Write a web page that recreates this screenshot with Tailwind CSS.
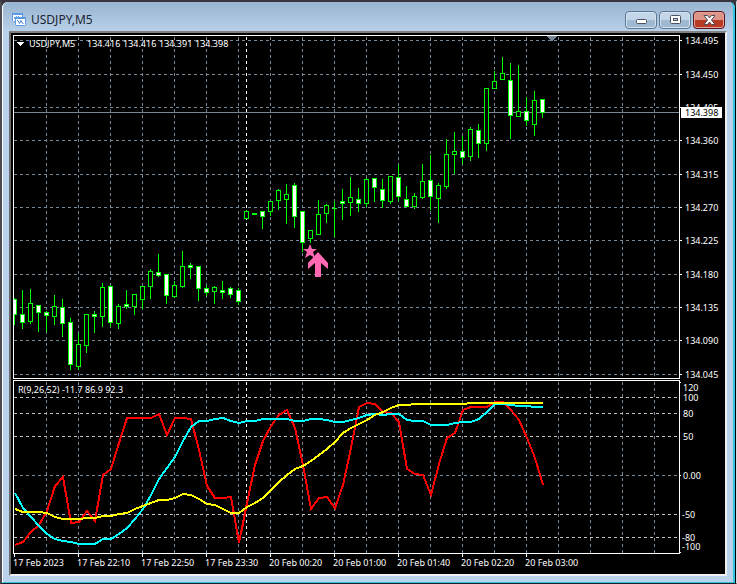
<!DOCTYPE html>
<html lang="en">
<head>
    <meta charset="UTF-8">
    <meta name="viewport" content="width=device-width, initial-scale=1.0">
    <title>USDJPY,M5</title>
    <script src="https://cdn.jsdelivr.net/npm/@tailwindcss/browser@4"></script>
</head>
<body class="bg-[#3a3640] font-['Noto_Sans',sans-serif]">
    <div class="border-t-2 border-l-2 border-r border-b border-t-[#3a3340] border-l-[#4a4a52] border-r-[#d8dce2] border-b-[#16202a]">
        <div class="rounded-t-md border-r border-r-black bg-[#b9d1ea]">
            <div class="rounded-t-md border-l border-r-2 border-b border-l-white border-r-[#35c3e0] border-b-[#35c3e0] px-1.5 pb-1.5 bg-linear-to-b from-[#99b4d1] to-[#b9d1ea] to-[30px]">
                <!-- Title bar -->
                <header class="flex h-[29px] items-center justify-between pl-0.5 pr-0.5 pt-1.5">
                    <div class="flex items-center gap-1">
                        <svg class="h-4 w-4" viewBox="0 0 16 16" fill="none">
                            <rect x="1.5" y="1.5" width="10" height="8" rx="1" fill="#fff" stroke="#5b9be6"/>
                            <path d="M1 2h11" stroke="#5b9be6" stroke-width="2"/>
                            <path d="M3.500 7V5M5.500 6V4M7.500 6V4" stroke="#5b9be6"/>
                            <rect x="4.500" y="5.500" width="10" height="8" rx="1" fill="#fff" stroke="#5b9be6"/>
                            <path d="M4 6h11" stroke="#5b9be6" stroke-width="2"/>
                            <path d="M6 8.500h1l1.500 3 1.500-3 1.500 3h1" stroke="#4a86d8"/>
                        </svg>
                        <h1 class="text-[12px] leading-4 text-[#1c2430]">USDJPY,M5</h1>
                    </div>
                    <div class="flex gap-0.5">
                        <button type="button" aria-label="Minimize" class="flex h-[18px] w-8 items-center justify-center rounded-sm border border-[#5c7590] bg-linear-to-b from-[#c3d5e8] from-50% to-[#9fb9d3] to-50% shadow-[inset_0_0_0_1px_#d5e3f1]">
                            <svg class="h-3 w-3" viewBox="0 0 12 12"><rect x="1.5" y="5.5" width="10" height="4" rx="1" fill="#fff" stroke="#4b535f"/></svg>
                        </button>
                        <button type="button" aria-label="Maximize" class="flex h-[18px] w-8 items-center justify-center rounded-sm border border-[#5c7590] bg-linear-to-b from-[#c3d5e8] from-50% to-[#9fb9d3] to-50% shadow-[inset_0_0_0_1px_#d5e3f1]">
                            <svg class="h-3 w-3" viewBox="0 0 12 12"><rect x="1.5" y="1.5" width="10" height="8" rx="1" fill="#fff" stroke="#4b535f"/><rect x="4.5" y="4.5" width="4" height="2" fill="#b9cce0" stroke="#4b535f"/></svg>
                        </button>
                        <button type="button" aria-label="Close" class="flex h-[18px] w-8 items-center justify-center rounded-sm border border-[#5a1420] bg-linear-to-b from-[#dc9488] from-50% to-[#b93a24] to-50% shadow-[inset_0_0_0_1px_#e5a498]">
                            <svg class="h-3 w-3" viewBox="0 0 12 12"><path d="M1 1.500h3.500L6.500 4l2-2.500H12L8.500 6l3.500 4.500H8.500L6.500 8l-2 2.500H1L4.500 6z" fill="#fff" stroke="#4b4a58"/></svg>
                        </button>
                    </div>
                </header>

                <!-- Chart, plotted in window pixels -->
                <main class="border-2 border-t-[#808080] border-l-[#696969] border-r-[#f0f0f0] border-b-[#f0f0f0] bg-black">
                    <svg id="chart" class="block h-auto w-full text-[9px]" viewBox="11 33 714 541" shape-rendering="crispEdges" role="img" aria-label="USDJPY M5 price chart with R indicator"></svg>
                </main>
            </div>
        </div>
    </div>

    <script>
        // high, low, body top, body bottom, filled
        const candles = [
            [298,325,299,315,1],[290,329,314,323,1],[289,324,303,322,0],[305,332,305,313,1],[311,332,312,316,1],
            [295,325,306,317,0],[299,337,307,324,1],[318,370,322,365,1],[334,370,344,367,0],[314,353,314,346,0],
            [311,333,314,317,1],[283,327,287,317,0],[285,327,286,323,1],[304,329,306,324,0],[290,309,304,307,1],
            [294,315,294,307,0],[286,309,286,300,0],[269,299,271,287,0],[254,277,272,276,1],[274,304,274,296,1],
            [281,298,285,297,0],[251,288,266,287,0],[263,279,265,268,1],[266,301,266,289,1],[286,296,288,293,1],
            [286,304,287,292,0],[281,299,290,293,1],[287,298,288,295,1],[288,305,290,302,1],[210,219,211,219,0],
            [213,215,213,215,0],[211,229,211,217,1],[201,216,201,212,0],[189,210,190,201,0],[184,224,194,200,0],
            [183,228,185,217,1],[211,252,211,243,1],[230,243,230,239,0],[200,235,214,235,0],[204,223,205,214,0],
            [201,237,208,209,0],[189,220,201,204,1],[177,216,197,203,0],[188,212,199,204,1],[178,207,179,204,0],
            [178,202,178,188,1],[179,208,189,201,1],[176,204,176,202,0],[165,201,177,197,1],[186,207,199,207,1],
            [193,209,196,207,0],[164,199,181,198,0],[155,210,180,197,1],[183,223,185,199,0],[139,189,154,187,0],
            [132,174,151,155,0],[136,164,151,158,1],[127,161,129,157,0],[124,158,130,144,1],[88,151,88,144,0],
            [71,89,81,89,0],[57,80,73,80,0],[63,139,80,116,1],[65,117,111,117,0],[97,126,111,121,1],
            [91,136,100,125,0],[99,118,99,113,1]
        ];
        const red = [545,542,532,525,511,486,477,523,522,511,521,475,469,443,418,418,418,418,414,435,418,418,419,450,486,498,498,497,543,503,465,441,426,415,410,428,465,509,498,497,508,485,448,407,403,404,412,413,422,469,474,475,495,464,438,433,410,407,407,407,402,402,410,420,438,458,485];
        const cyan = [493,508,517,526,534,539,541,542,544,544,544,539,539,534,528,519,509,495,479,468,457,441,427,421,421,419,418,421,423,421,421,419,419,419,419,421,421,419,419,420,422,422,420,418,415,414,415,414,414,420,421,421,425,425,425,423,422,422,419,412,404,404,405,406,406,407,407];
        const yellow = [509,512,512,512,513,517,519,519,519,518,518,516,516,514,513,509,506,503,500,500,498,494,495,499,504,505,509,513,513,507,503,498,490,482,475,469,466,461,455,449,442,433,428,424,420,415,412,408,405,405,404,404,404,404,404,404,404,403,403,403,403,403,403,403,403,403,403];
        const prices = [['134.495',40],['134.450',74],['134.405',107],['134.360',140],['134.315',174],['134.270',207],['134.225',240],['134.180',274],['134.135',307],['134.090',340],['134.045',374]];
        const levels = [['120',387],['100',397],['80',413],['50',436],['0.00',475],['-50',514],['-80',537],['-100',546]];
        const times = ['17 Feb 2023','17 Feb 22:10','17 Feb 22:50','17 Feb 23:30','20 Feb 00:20','20 Feb 01:00','20 Feb 01:40','20 Feb 02:20','20 Feb 03:00'];
        const ohlc = ['134.416', '134.416', '134.391', '134.398'];

        const rect = (x, y, w, h, fill) => `<rect x="${x}" y="${y}" width="${w}" height="${h}" fill="${fill}"/>`;
        const text = (x, y, s, fill = '#fff') => `<text x="${x}" y="${y}" fill="${fill}">${s}</text>`;
        const hdash = (y, c) => `<path d="M14 ${y + 0.5}H679" stroke="${c}" stroke-dasharray="3 3"/>`;
        const vdash = (x, c) => `<path d="M${x + 0.5} 37V378M${x + 0.5} 382V553" stroke="${c}" stroke-dasharray="3 3"/>`;
        const curve = (ys, c) => `<polyline points="${ys.map((y, i) => `${15 + i * 8},${y}`).join(' ')}" fill="none" stroke="${c}" stroke-width="2"/>`;

        const slate = '#778899';
        let out = '';

        // grid
        prices.forEach(([, y]) => out += hdash(y, slate));
        for (let x = 46; x < 679; x += 32) out += vdash(x, slate);
        [397, 413, 436, 514, 537].forEach(y => out += hdash(y, '#c0c0c0'));
        out += hdash(475, slate) + vdash(246, '#fff');
        out += rect(14, 112, 665, 1, slate);
        out += `<path d="M546 36h11l-5 5h-1z" fill="${slate}"/>`;

        // candles
        candles.forEach(([high, low, top, bottom, filled], i) => {
            const x = 14 + i * 8;
            out += rect(x, high, 1, low - high, '#0f0');
            out += rect(x - 2, top, 5, bottom - top, '#0f0');
            if (bottom - top > 2) out += rect(x - 1, top + 1, 3, bottom - top - 2, filled ? '#fff' : '#000');
        });

        // indicator lines
        out += curve(red, '#f00') + curve(cyan, '#0ff') + curve(yellow, '#ff0');

        // signal markers
        out += '<g fill="#ff69b4" shape-rendering="auto"><path d="M310 244l2 5h5l-4 3 2 6-5-3-5 3 2-6-4-3h5z"/><path d="M318 252l10 11v6l-7-6v14h-6v-14l-7 6v-6z"/></g>';

        // frames and axis ticks
        out += rect(11, 33, 2, 541, '#000') + rect(13, 35, 667, 1, '#fff') + rect(13, 35, 1, 344, '#fff') + rect(13, 378, 667, 1, '#fff');
        out += rect(13, 380, 667, 1, '#fff') + rect(13, 380, 1, 174, '#fff') + rect(13, 553, 667, 1, '#fff');
        out += rect(679, 35, 1, 344, '#fff') + rect(679, 380, 1, 174, '#fff');
        prices.forEach(([s, y]) => out += rect(680, y, 2, 1, '#fff') + text(685, y + 4, s));
        levels.forEach(([s, y]) => out += text(s[0] === '-' ? 682 : 683, y + 4, s));
        [382, 475, 552].forEach(y => out += rect(680, y, 1, 1, '#fff'));
        times.forEach((s, i) => out += rect(14 + i * 64, 554, 1, 3, '#fff') + text(13 + i * 64, 566, s));
        out += rect(681, 107, 41, 11, '#fff') + text(685, 116, '134.398', '#000');

        // captions
        out += '<path d="M17 42h7l-3 4h-1z" fill="#fff"/>';
        out += text(29, 47, 'USDJPY,M5');
        ohlc.forEach((s, i) => out += text(87 + i * 36, 47, s));
        out += text(18, 393, 'R(9,26,52) -11.7 86.9 92.3');

        document.getElementById('chart').innerHTML = out;
    </script>
</body>
</html>
